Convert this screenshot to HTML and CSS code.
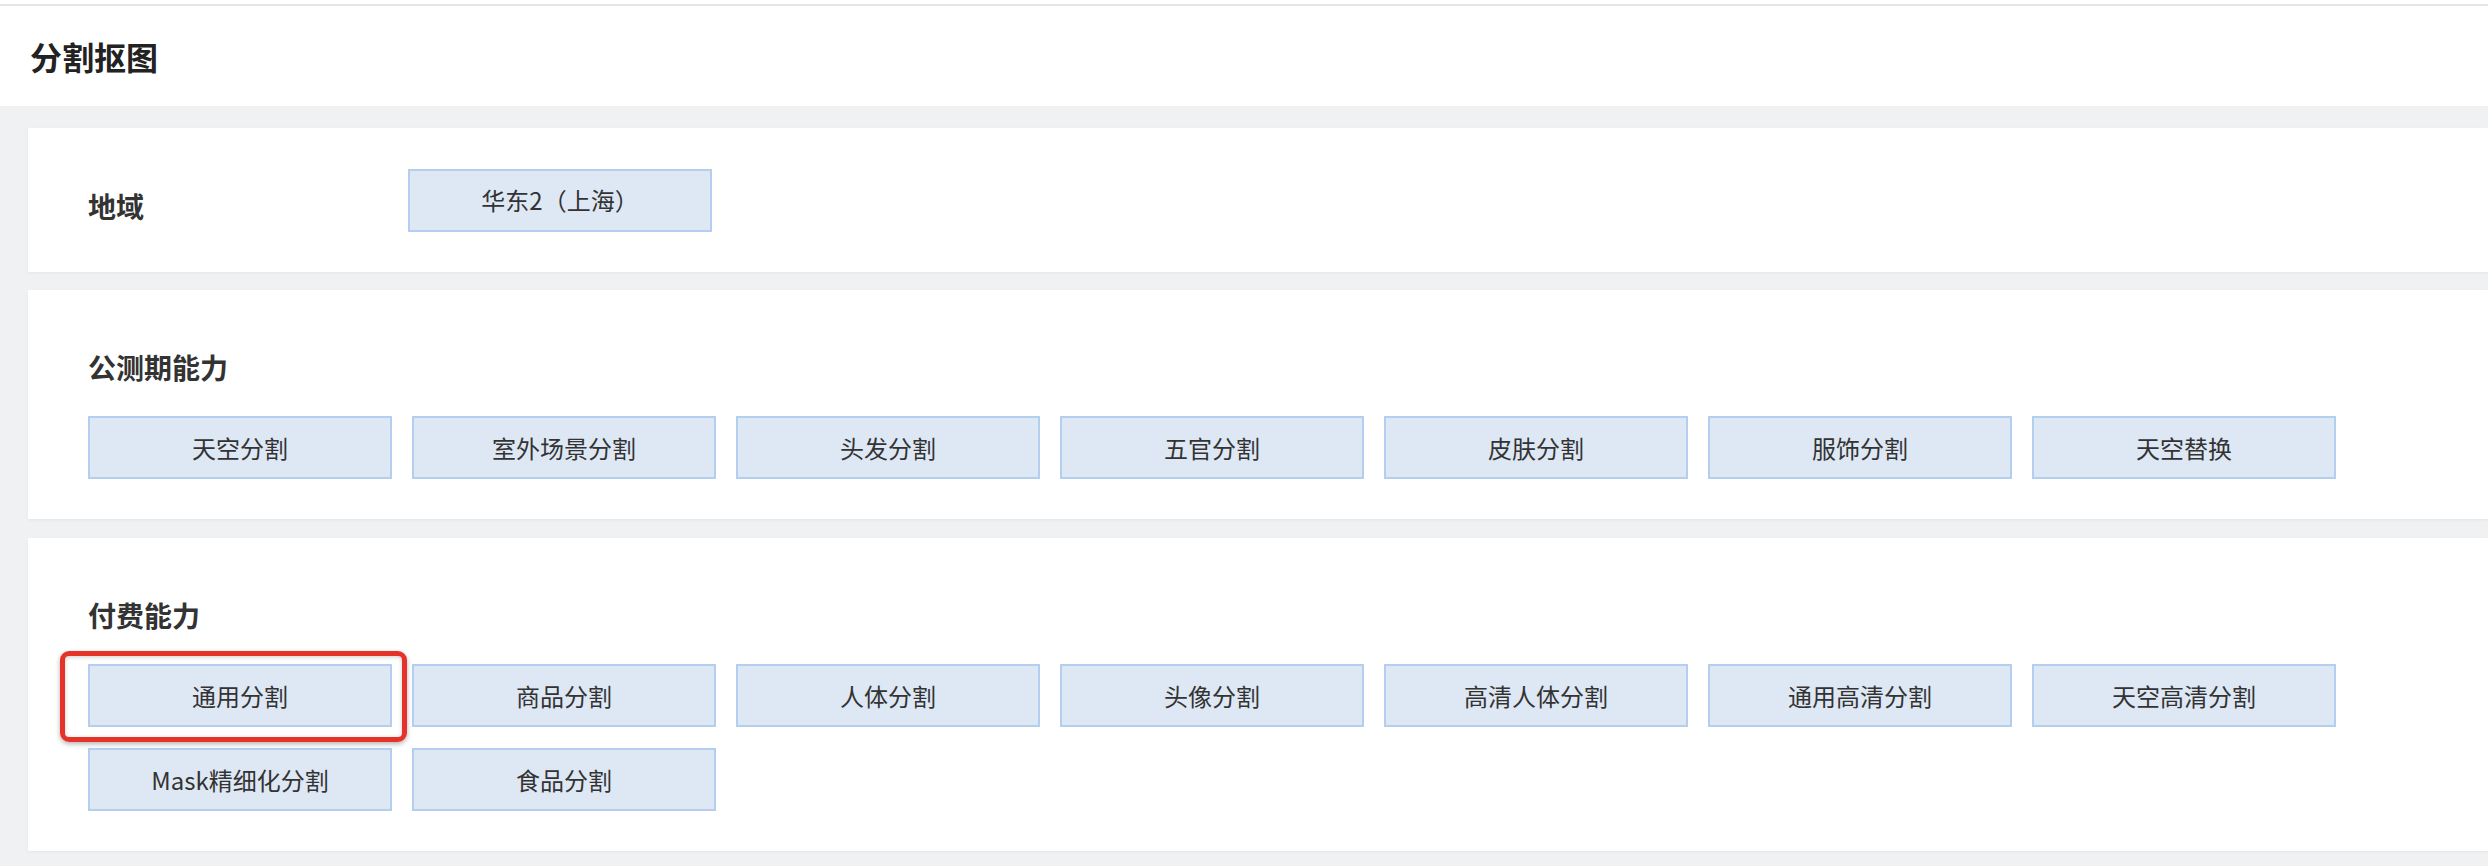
FILE: index.html
```html
<!DOCTYPE html>
<html lang="zh-CN">
<head>
<meta charset="utf-8">
<title>分割抠图</title>
<link rel="stylesheet" href="styles.css">
</head>
<body>
<div class="top-strip"></div>
<header class="page-header">
  <h1 class="page-title">分割抠图</h1>
</header>
<main class="content">
  <section class="card card-region">
    <div class="region-label">地域</div>
    <div class="opt">华东2（上海）</div>
  </section>
  <section class="card card-group">
    <h2 class="group-title">公测期能力</h2>
    <div class="opt-grid">
      <div class="opt">天空分割</div>
      <div class="opt">室外场景分割</div>
      <div class="opt">头发分割</div>
      <div class="opt">五官分割</div>
      <div class="opt">皮肤分割</div>
      <div class="opt">服饰分割</div>
      <div class="opt">天空替换</div>
    </div>
  </section>
  <section class="card card-group card-last">
    <h2 class="group-title">付费能力</h2>
    <div class="opt-grid">
      <div class="opt opt-marked">通用分割</div>
      <div class="opt">商品分割</div>
      <div class="opt">人体分割</div>
      <div class="opt">头像分割</div>
      <div class="opt">高清人体分割</div>
      <div class="opt">通用高清分割</div>
      <div class="opt">天空高清分割</div>
      <div class="opt">Mask精细化分割</div>
      <div class="opt">食品分割</div>
    </div>
  </section>
</main>
</body>
</html>
```
FILE: styles.css
```css
* { box-sizing: border-box; }
html, body { margin: 0; padding: 0; }
body {
  background: #f0f1f3;
  font-family: "Noto Sans CJK SC", "Noto Sans", sans-serif;
  color: #333;
  width: 2488px;
  height: 866px;
  overflow: hidden;
}
.top-strip {
  height: 4px;
  background: #ffffff;
}
.page-header {
  height: 102px;
  background: #ffffff;
  border-top: 2px solid #e4e5e7;
  display: flex;
  align-items: center;
  padding-left: 30px;
}
.page-title {
  margin: 0;
  font-size: 32px;
  font-weight: 700;
  color: #222;
  line-height: 40px;
}
.content {
  padding: 22px 0 0 28px;
  display: flex;
  flex-direction: column;
  gap: 18px;
}
.card {
  background: #ffffff;
  box-shadow: 0 1px 3px rgba(0, 0, 0, 0.05);
}
.card-region {
  height: 144px;
  display: flex;
  align-items: center;
  padding-left: 60px;
}
.region-label {
  width: 320px;
  font-size: 28px;
  font-weight: 700;
  line-height: 40px;
  padding-top: 12px;
  color: #333;
}
.card-group {
  padding: 57px 0 40px 60px;
}
.card-last {
  margin-top: 1px;
}
.group-title {
  margin: 0 0 29px 0;
  font-size: 28px;
  font-weight: 700;
  line-height: 40px;
  color: #333;
}
.opt-grid {
  display: grid;
  grid-template-columns: repeat(7, 304px);
  column-gap: 20px;
  row-gap: 21px;
}
.opt {
  width: 304px;
  height: 63px;
  background: #dee8f5;
  border: 2px solid #b4cfed;
  display: flex;
  align-items: center;
  justify-content: center;
  font-size: 24px;
  color: #333;
  line-height: 1;
}
.opt-marked {
  position: relative;
}
.opt-marked::after {
  content: "";
  position: absolute;
  top: -15px;
  bottom: -17px;
  left: -30px;
  right: -17px;
  border: 5px solid #e5332a;
  border-radius: 9px;
  box-shadow: 0 2px 5px rgba(0, 0, 0, 0.3), inset 0 1px 4px rgba(0, 0, 0, 0.2);
}
```
